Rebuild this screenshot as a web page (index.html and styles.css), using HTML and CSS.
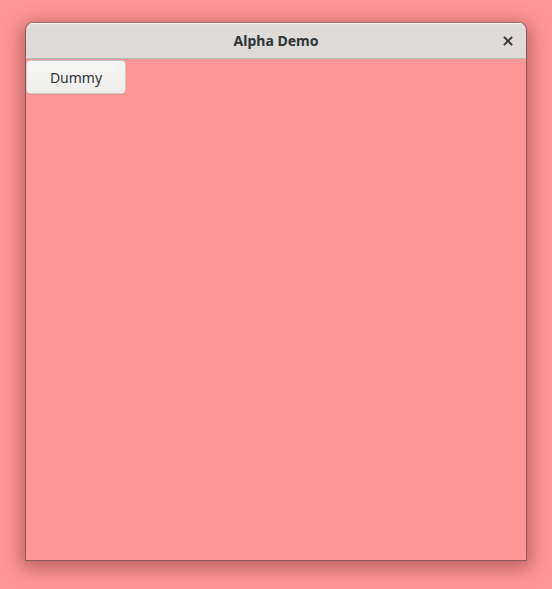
FILE: index.html
```html
<!DOCTYPE html>
<html>
<head>
<meta charset="utf-8">
<link rel="stylesheet" href="styles.css">
</head>
<body>
<div class="stage">
  <div class="window">
    <div class="titlebar">
      <span class="title">Alpha Demo</span>
      <span class="close" aria-label="Close">
        <svg width="10" height="10" viewBox="0 0 10 10"><path d="M1.5 1.5 L8.5 8.5 M8.5 1.5 L1.5 8.5" stroke="#2e3436" stroke-width="1.8" stroke-linecap="square"/></svg>
      </span>
    </div>
    <div class="content">
      <button class="btn">Dummy</button>
    </div>
  </div>
</div>
</body>
</html>
```
FILE: styles.css
```css
html, body {
  margin: 0;
  padding: 0;
  background: #ff9696;
  width: 552px;
  height: 589px;
  overflow: hidden;
  font-family: "Noto Sans", "Open Sans", sans-serif;
}
.stage {
  padding: 22px 0 0 25px;
}
.window {
  width: 500px;
  height: 537px;
  border: 1px solid #8a5a5a;
  border-top-color: #9a7070;
  border-radius: 8px 8px 0 0;
  background: #ff9696;
  box-shadow: 0 4px 18px 3px rgba(80, 20, 20, 0.42);
  display: flex;
  flex-direction: column;
  overflow: hidden;
}
.titlebar {
  height: 35px;
  flex: none;
  background: linear-gradient(#e4e1de, #dedbd8 10%, #dedad7);
  border-bottom: 1px solid #bfb8b1;
  display: flex;
  align-items: center;
  justify-content: center;
  position: relative;
  box-shadow: inset 0 1px #f4f2f0;
}
.title {
  font-weight: bold;
  font-size: 14px;
  color: #2e3436;
}
.close {
  position: absolute;
  right: 13px;
  top: 13px;
  width: 10px;
  height: 10px;
  display: flex;
}
.content {
  flex: 1;
  padding: 1px 0 0 0;
}
.btn {
  width: 100px;
  height: 34px;
  margin: 0;
  border: 1px solid #cdc7c2;
  border-radius: 4px;
  background: linear-gradient(#f6f6f5, #efeeec);
  box-shadow: 0 1px rgba(0,0,0,0.06);
  font-family: "Noto Sans", "Open Sans", sans-serif;
  font-size: 14px;
  color: #2e3436;
  padding: 0;
}
```
